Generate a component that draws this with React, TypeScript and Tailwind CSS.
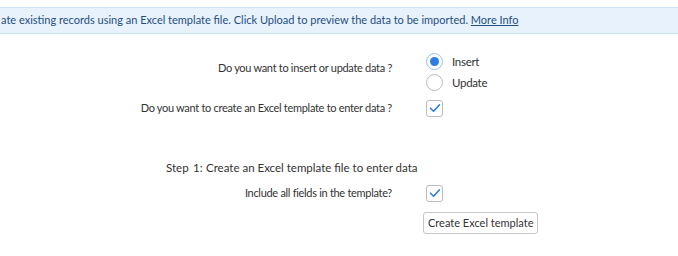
import React from "react";

const font = { fontFamily: "Lato, 'Noto Sans', sans-serif" };

function Check() {
  return (
    <div className="w-[17px] h-[17px] rounded-[3px] border border-[#b9bcc0] bg-white flex items-center justify-center">
      <svg width="12" height="10" viewBox="0 0 12 10">
        <path d="M1.5 5.2 L4.6 8.2 L10.5 1.8" fill="none" stroke="#2f7de1" strokeWidth="1.6" strokeLinecap="round" strokeLinejoin="round" />
      </svg>
    </div>
  );
}

function Radio({ on }: { on?: boolean }) {
  return (
    <div className={"w-[17px] h-[17px] rounded-full border bg-white flex items-center justify-center " + (on ? "border-[#9cc1ee]" : "border-[#b9bcc0]")}>
      {on && <div className="w-[9px] h-[9px] rounded-full bg-[#2f7de1]" />}
    </div>
  );
}

export default function App() {
  return (
    <div className="w-[678px] h-[256px] bg-white text-[11px] text-[#333] tracking-[-0.3px]" style={font}>
      <div className="pt-[7px]">
        <div className="h-[27px] bg-[#e7f2fc] border-y border-[#cfe3f6] flex items-center pl-[1px] text-[#1f4e7f] text-[11px] tracking-normal whitespace-nowrap overflow-hidden">
          ate existing records using an Excel template file. Click Upload to preview the data to be imported.&nbsp;
          <span className="underline">More Info</span>
        </div>
      </div>
      <div className="flex mt-[19px]">
        <div className="w-[392px] text-right pt-[7px]">Do you want to insert or update data ?</div>
        <div className="ml-[34px] flex flex-col gap-[4px] text-[11.5px]">
          <div className="flex items-center gap-[9px]"><Radio on /><span>Insert</span></div>
          <div className="flex items-center gap-[9px]"><Radio /><span>Update</span></div>
        </div>
      </div>
      <div className="flex items-center mt-[8px]">
        <div className="w-[392px] text-right">Do you want to create an Excel template to enter data ?</div>
        <div className="ml-[34px]"><Check /></div>
      </div>
      <div className="pl-[166px] mt-[42px] flex text-[11.5px] tracking-normal">
        <span className="w-[27px]">Step</span>
        <span className="w-[13px]">1:</span>
        <span>Create an Excel template file to enter data</span>
      </div>
      <div className="flex items-center mt-[9px]">
        <div className="w-[392px] text-right">Include all fields in the template?</div>
        <div className="ml-[34px]"><Check /></div>
      </div>
      <div className="pl-[423px] mt-[10px]">
        <button className="h-[22px] px-[4px] border border-[#c4c6c9] rounded-[3px] bg-white text-[11px] tracking-normal text-[#333]">Create Excel template</button>
      </div>
    </div>
  );
}
